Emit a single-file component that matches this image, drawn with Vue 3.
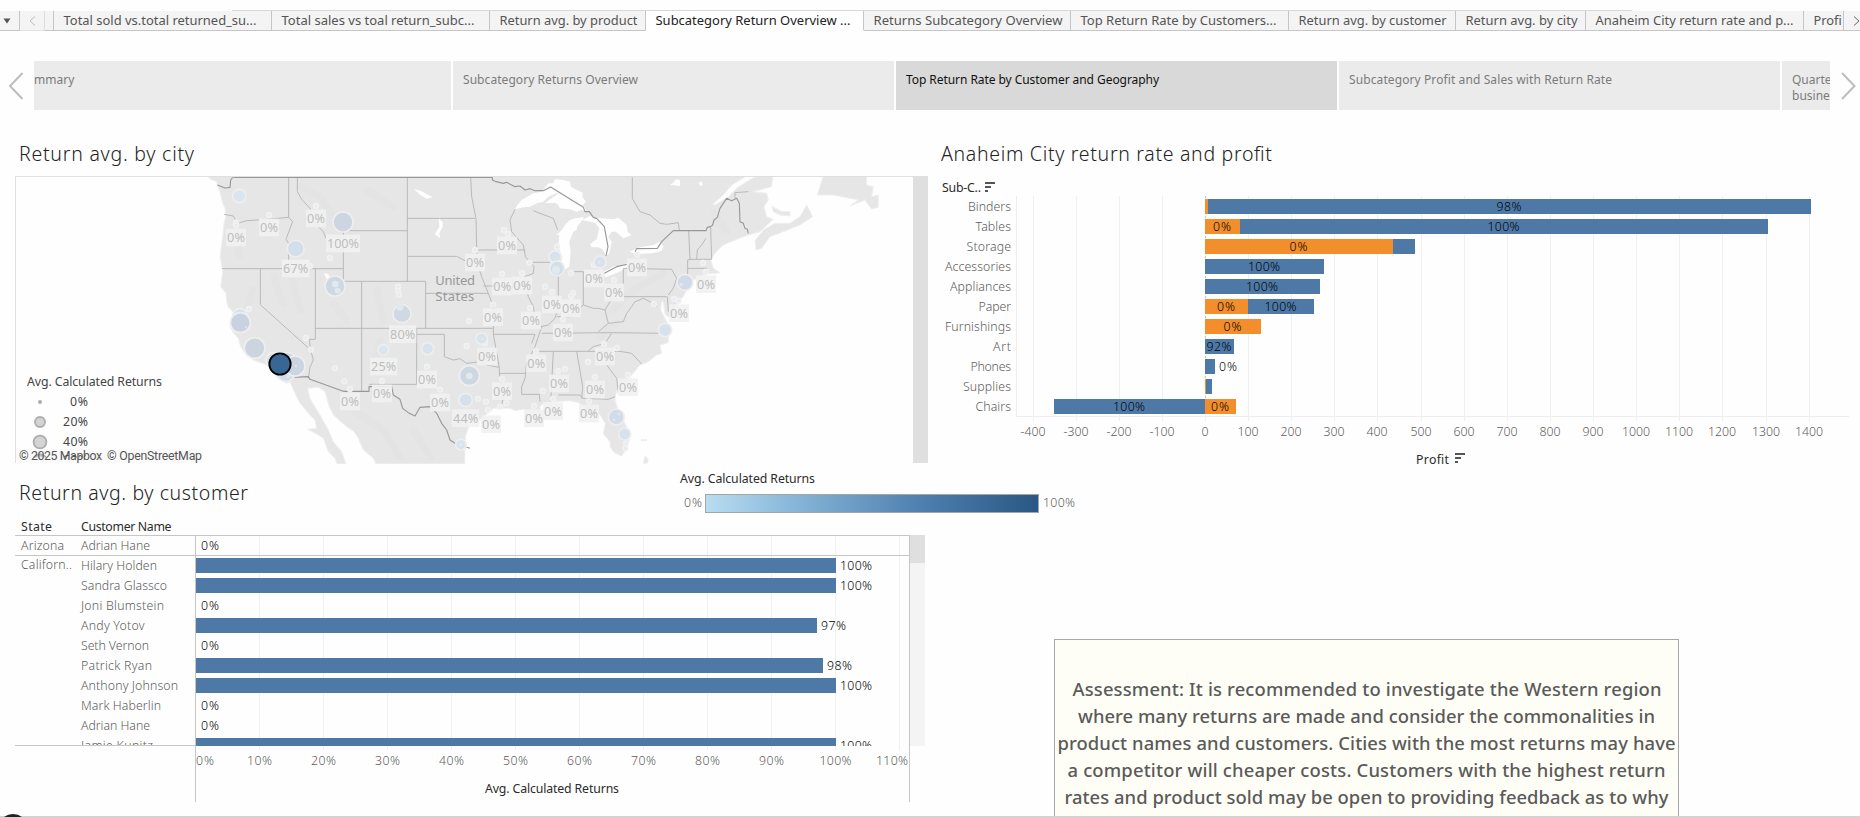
<script setup>
const tabs = [
  { t: 'Total sold vs.total returned_su...', w: 218 },
  { t: 'Total sales vs toal return_subc...', w: 218 },
  { t: 'Return avg. by product', w: 156 },
  { t: 'Subcategory Return Overview ...', w: 218, active: true },
  { t: 'Returns Subcategory Overview', w: 207 },
  { t: 'Top Return Rate by Customers...', w: 218 },
  { t: 'Return avg. by customer', w: 167 },
  { t: 'Return avg. by city', w: 130 },
  { t: 'Anaheim City return rate and p...', w: 218 },
  { t: 'Profit', w: 40 }
]
const tabTextWidth = { 0: 193, 1: 193, 2: 138, 3: 195, 4: 189, 5: 196, 6: 148, 7: 112, 8: 198, 9: 33 }

const points = [
  { t: 'Subcategory Returns Overview', ls: 0.06 },
  { t: 'Top Return Rate by Customer and Geography', active: true, ls: -0.06 },
  { t: 'Subcategory Profit and Sales with Return Rate', ls: 0.1 }
]

// Profit chart: segments are [from, to, colour, label]
const B = '#4e79a7'
const O = '#f28e2b'
const zero = 1205
const profit = [
  { n: 'Binders', w: 43, s: [[1205, 1208, O], [1208, 1811, B, '98%']] },
  { n: 'Tables', w: 35.5, s: [[1205, 1240, O, '0%'], [1240, 1768, B, '100%']] },
  { n: 'Storage', w: 44.5, s: [[1205, 1393, O, '0%'], [1393, 1415, B]] },
  { n: 'Accessories', w: 66, s: [[1205, 1324, B, '100%']] },
  { n: 'Appliances', w: 61, s: [[1205, 1320, B, '100%']] },
  { n: 'Paper', w: 32.5, s: [[1205, 1248, O, '0%'], [1248, 1314, B, '100%']] },
  { n: 'Furnishings', w: 66, s: [[1205, 1261, O, '0%']] },
  { n: 'Art', w: 18, s: [[1205, 1234, B, '92%']] },
  { n: 'Phones', w: 40.5, s: [[1205, 1215, B]], out: '0%' },
  { n: 'Supplies', w: 48, s: [[1205, 1206, O], [1206, 1212, B]] },
  { n: 'Chairs', w: 35.5, s: [[1054, 1205, B, '100%'], [1205, 1236, O, '0%']] }
]
const profitTicks = Array.from({ length: 19 }, (_, i) => (i - 4) * 100)
const px = (v) => Math.round(zero + v * 0.4312) + 0.5
const pctW = { 2: 18, 3: 25, 4: 32 }
const numW = { 1: 7, 3: 21, 4: 28 }
const numLen = (v) => (v < 0 ? 25 : numW[String(v).length])

const customers = [
  { n: 'Adrian Hane', w: 69, v: 0 },
  { n: 'Hilary Holden', w: 76, v: 100 },
  { n: 'Sandra Glassco', w: 86, v: 100 },
  { n: 'Joni Blumstein', w: 83, v: 0 },
  { n: 'Andy Yotov', w: 63.5, v: 97 },
  { n: 'Seth Vernon', w: 68, v: 0 },
  { n: 'Patrick Ryan', w: 71, v: 98 },
  { n: 'Anthony Johnson', w: 97, v: 100 },
  { n: 'Mark Haberlin', w: 80, v: 0 },
  { n: 'Adrian Hane', w: 69, v: 0 },
  { n: 'Jamie Kunitz', w: 72, v: 100 }
]
const rateTicks = Array.from({ length: 12 }, (_, i) => i * 10)
const cx = (v) => Math.round(195.5 + v * 6.405)

// Map geometry, three units per pixel
const land =
  'M622,138 632,148 650,155 662,195 668,220 675,235 677,262 672,280 668,320 660,380 668,420 665,450 662,470 678,490 680,515 684,530 702,548 695,570 690,590 700,608 715,625 722,650 735,670 760,690 800,705 830,740 860,760 870,755 885,790 900,820 930,855 945,870 950,895 923,898 950,912 970,925 985,965 1005,985 1012,1002 1038,1002 1025,965 1000,935 985,900 960,855 950,840 930,805 923,775 955,772 975,785 988,830 1000,855 1040,890 1062,905 1075,925 1090,960 1120,985 1128,1002 1394,1002 1396,920 1410,880 1440,868 1470,845 1480,835 1530,835 1545,842 1570,838 1600,850 1625,865 1620,830 1630,820 1660,815 1710,812 1735,818 1750,830 1765,850 1790,845 1800,855 1816,880 1810,912 1830,935 1830,950 1843,968 1865,978 1877,960 1888,930 1880,890 1855,840 1845,810 1850,780 1880,755 1895,735 1920,705 1945,695 1970,675 1985,670 1980,645 2005,638 2005,620 2012,590 2000,575 1995,565 1982,540 1985,515 1990,515 1996,555 2010,562 2020,555 2035,510 2050,500 2060,480 2075,465 2050,462 2080,450 2120,432 2145,430 2160,428 2140,415 2132,390 2145,370 2170,345 2205,330 2245,315 2280,305 2320,268 2300,260 2292,230 2305,210 2300,190 2260,185 2315,170 2318,138 2270,138 2240,155 2210,175 2185,200 2145,225 2138,223 2170,195 2195,165 2240,138Z M2268,360 2265,332 2290,300 2325,280 2370,280 2400,260 2420,225 2438,260 2400,285 2350,305 2310,320 2285,355Z M2315,228 2345,245 2370,245 2370,258 2340,255 2320,245Z M2470,138 2452,195 2500,195 2550,205 2575,210 2550,228 2595,210 2615,238 2635,232 2635,195 2615,200 2620,170 2600,165 2600,138Z M1930,1000 1935,978 1945,990 1942,1000Z M1923,929H1940V932H1923Z'
const lakes =
  'M105,118 112,105 125,90 160,70 185,65 205,40 220,40 225,27 250,30 270,35 272,48 280,55 308,68 308,82 318,95 308,105 322,125 305,120 290,125 270,118 240,115 232,102 222,98 195,100 210,88 225,78 240,65 205,80 190,95 170,100 150,110 130,112Z M235,230 238,195 230,195 245,180 255,165 270,150 285,145 312,142 300,160 292,168 290,180 280,185 268,215 272,245 268,290 250,302 240,290 247,262Z M305,150 330,138 362,145 400,148 415,143 440,165 443,185 455,195 430,205 408,185 395,185 385,200 395,215 388,250 378,258 368,238 355,232 335,232 330,222 350,208 358,175 345,158Z M372,305 400,290 440,280 450,285 430,300 395,315 375,322Z M448,245 480,232 520,225 540,215 550,230 545,242 520,250 470,252Z M570,45 580,38 588,28 600,30 600,48 585,46Z M655,38 666,34 668,46 660,48Z'
const westLakes =
  'M1242,178 1262,182 1275,190 1298,202 1280,206 1262,196Z M1316,252 1320,270 1328,275 1328,290 1318,310 1320,325 1312,318 1305,312 1318,290Z M972,430 985,432 990,445 980,448Z'
const nation =
  'M700,142H1477V150L1488,155 1510,160 1520,157 1545,170 1560,168 1575,180 1590,176 1605,182 1630,182 1652,171 1750,232 1755,245 1768,245 1780,262 1790,265 1813,290 1824,350 1818,378 M1813,430 1850,410 1880,403 M1905,365 1910,356 1972,355 1985,335 2020,302H2118L2122,292 2132,290 2138,285 2142,270 2152,262 2160,235 2180,205 2195,212 2210,205 2218,220 2220,275 2230,280 2235,295 2242,298 2245,310 M875,742 925,740 930,748 1030,784H1107V770H1175L1180,795 1200,808 1208,835 1225,848 1245,858 1260,832 1290,830 1310,850 1325,880 1340,900 1350,930 1365,940 1410,955 M652,165 675,174 690,172 692,150 698,142'
const states =
  'M672,253 700,258 712,280 740,272 800,268 866,262 M866,142V262L878,275 858,328 866,340V416 M666,416H1030 M892,142V185L905,208 930,235 940,270 955,290 970,305 978,325 M1030,302H1222 M1030,302V454H1277V595 M781,416V524L932,660 940,690 930,712 925,745 M946,416V628H928L932,660 M1085,454V784 M946,595H1480 M1222,142V454 M1222,265H1425 M1222,379H1370L1395,392 1430,385 M1250,595V763H1108 M1250,613H1333V680L1360,690 1380,686 1400,700 1440,695 1460,705 1498,712 M1277,490H1465 M1412,142 1415,200 1428,265 1430,360 1435,410 1445,440 1465,490 1480,530V613L1498,712V730L1510,800 1505,825 M1430,360H1576 M1545,238 1530,270 1535,305 1570,345 1576,380 1602,410 1600,430 1575,440 1575,460 1585,500 1600,530 1605,560 1625,590 M1450,468H1575 M1480,613H1605L1595,640 M1598,397H1650 M1600,242 1620,250 1660,265 1673,300 M1675,440V530L1665,565 1645,585 1625,590 M1750,425V525 M1705,425H1750 M1670,560 1710,560 1750,525 1780,535 1795,535 1815,540 1830,515 1868,470 M1815,540 1825,580 1795,605 M1625,610 1835,608 1995,610 M1835,610 1815,640 1780,650 1765,662 M1605,664H1860L1895,670 1925,702 M1625,590 1605,650 1580,700 1575,745 1565,770 1565,793H1618L1620,815 M1498,730H1577 M1660,664 1652,815 M1730,664 1748,770 1745,805 M1675,795H1740L1748,805 1825,808 1845,800 M1800,664 1820,705 1850,745 1855,790 M1825,580 1870,575 1880,550 1895,530 1905,515 1930,505 1950,515 1970,530 M1870,415V500H2000 M1870,415 2015,418 2030,445 2020,475 2005,495 M2066,302 2070,388 2063,390V435 M2132,292 2135,388H2070 M2118,325 2105,345 2092,360 2090,388 M2063,415H2122 M1897,142 1897,205 1920,245 1950,255 1980,280 2000,283 2035,278 2038,300 M2205,205V188L2245,185 M2002,500 2005,545'
const relief = 'M900,170 960,200 1000,260 1060,330 M1100,180 1180,230 M820,440 850,520 M870,420 900,540 M1000,520 1040,570 M1130,480 1150,570 M1140,630 1120,720 M700,300 720,380 M760,480 740,530 M1840,540 1900,480 1990,430 M1800,620 1850,580 M2140,250 2180,300 M1060,840 1150,900 1200,980 M1240,900 1290,980'
const marks = [
  [718, 198, 20, '#dae5ee'], [1029, 276, 30, '#ccd5e0'], [887, 356, 25, '#d2dee8'], [1005, 468, 30, '#ced8e2'],
  [1206, 551, 27, '#cfd9e4'], [720, 558, 22, '#d5e0ea'], [721, 578, 30, '#c9d3df'], [764, 654, 31, '#cbd4df'],
  [820, 690, 22, '#d8e3ec'], [858, 728, 27, '#d3deea'], [862, 695, 28, '#cdd7e2'], [885, 708, 30, '#cbd5e1'],
  [1150, 660, 16, '#dae5ee'], [1283, 656, 18, '#d7e2ec'], [1408, 737, 30, '#cdd7e1'], [1397, 810, 20, '#d5e0eb'],
  [1383, 944, 16, '#d8e3ed'], [1665, 380, 18, '#d7e2ec'], [1671, 415, 22, '#d2deea'], [1800, 396, 18, '#d7e2ec'],
  [2055, 457, 24, '#d0dbe7'], [1995, 600, 20, '#d6e1ec'], [1445, 626, 17, '#d8e3ec'], [1849, 861, 24, '#d1dce8'],
  [1874, 912, 18, '#d7e2ec']
]
const dots = [
  [807, 255], [948, 228], [708, 278], [708, 286], [990, 384], [930, 408], [747, 537], [1194, 470], [1194, 482], [1197, 494],
  [918, 624], [933, 659], [1005, 715], [1033, 754], [1050, 777], [1146, 753], [1281, 710], [1320, 779], [1407, 573],
  [1400, 648], [1512, 300], [1524, 312], [1425, 360], [1671, 350], [1588, 398], [1506, 432], [1566, 429], [1713, 429], [1782, 405],
  [1842, 450], [1912, 375], [2109, 399], [2118, 425], [1635, 470], [1656, 486], [1719, 489], [1714, 498], [1962, 522], [2022, 507],
  [2036, 512], [1479, 524], [1590, 534], [1689, 568], [1455, 640], [1812, 642], [1851, 654], [1608, 663], [1764, 696],
  [1674, 723], [1695, 717], [1785, 741], [1884, 735], [1506, 747], [1434, 807], [1458, 815], [1464, 840], [1500, 830], [1520, 820],
  [1629, 783], [1659, 807], [1602, 828], [1767, 814], [1878, 940], [1876, 955]
]
const inner = [
  [1006, 462, 10], [1013, 482, 9], [1200, 531, 11], [738, 591, 3], [888, 708, 3], [864, 740, 4], [1408, 738, 10], [1668, 420, 12],
  [1798, 398, 4], [2044, 463, 5], [1978, 600, 3], [1448, 627, 4], [1857, 852, 4], [1842, 870, 4], [1383, 944, 6]
]
const labels = [
  [708, 323], [807, 293], [948, 266], [1029, 341, '100%'], [887, 416, '67%'], [1208, 613, '80%'], [1151, 710, '25%'],
  [1281, 749], [1146, 791], [1050, 815], [1320, 818], [1397, 865, '44%'], [1521, 347], [1425, 398], [1507, 470],
  [1567, 467], [1782, 446], [1911, 413], [1842, 488], [2118, 463], [1656, 524], [1713, 535], [2037, 550], [1479, 562],
  [1593, 572], [1689, 608], [1461, 680], [1815, 680], [1609, 700], [1677, 761], [1785, 779], [1884, 772], [1506, 784],
  [1602, 865], [1659, 844], [1767, 851], [1473, 883]
].map(([x, y, t = '0%']) => ({ x, y, t, w: { 2: 54, 3: 76, 4: 96 }[t.length] }))
</script>

<template>
  <div class="page">
    <nav class="tabs">
      <div class="tab menu"><svg width="8" height="6"><path d="M0.5,0.5H7.5L4,5.5Z" fill="#555" /></svg></div>
      <div class="tab prev"><svg width="7" height="10"><path d="M6,0.5 1,5 6,9.5" fill="none" stroke="#bbb" /></svg></div>
      <div class="tab spacer"></div>
      <div v-for="(tab, i) in tabs" :key="i" class="tab" :class="{ active: tab.active }" :style="{ width: tab.w + 'px' }">
        <svg class="tab-text" :width="tab.w - 2" height="20">
          <text x="9.5" y="14" :textLength="tabTextWidth[i]" lengthAdjust="spacingAndGlyphs">{{ tab.t }}</text>
        </svg>
      </div>
      <div class="tab next"><svg width="7" height="10"><path d="M1,0.5 6,5 1,9.5" fill="none" stroke="#666" /></svg></div>
      <i class="tab-rule"></i>
    </nav>

    <section class="story">
      <svg class="arrow" width="34" height="49"><path d="M22.5,12 10,25 22.5,38" /></svg>
      <div class="point first">mmary</div>
      <div v-for="p in points" :key="p.t" class="point" :class="{ active: p.active }" :style="{ letterSpacing: p.ls + 'px' }">{{ p.t }}</div>
      <div class="point last">Quarte<br />busine</div>
      <svg class="arrow" width="30" height="49"><path d="M12,12 24.5,25 12,38" /></svg>
    </section>

    <main class="dash">
      <section class="col">
        <h2 class="title"><svg width="900" height="40"><text x="19" y="31" textLength="175">Return avg. by city</text></svg></h2>
        <svg class="map" viewBox="0 170 930 295" width="930" height="295">
          <defs>
            <clipPath id="mapArea"><rect x="16" y="177" width="897" height="287" /></clipPath>
            <clipPath id="legendTail"><rect x="16" y="448" width="100" height="9.5" /></clipPath>
          </defs>
          <g clip-path="url(#mapArea)">
            <g transform="translate(0 130) scale(.33333)">
              <path :d="land" fill="#e6e6e6" stroke="#efefef" stroke-width="3" />
              <path :d="relief" fill="none" stroke="#e2e2e2" stroke-width="20" stroke-linecap="round" stroke-linejoin="round" opacity=".5" />
              <path :d="lakes" fill="#fefefe" transform="translate(1440 120)" />
              <path :d="westLakes" fill="#fefefe" />
              <path :d="states" fill="none" stroke="#b2b2b2" stroke-width="2.6" />
              <path :d="nation" fill="none" stroke="#989898" stroke-width="3.4" stroke-linejoin="round" />
              <g class="country">
                <text x="1306" y="465" textLength="119">United</text>
                <text x="1306" y="512" textLength="117">States</text>
              </g>
              <circle v-for="(d, i) in dots" :key="'d' + i" :cx="d[0]" :cy="d[1]" r="7" fill="#e7ebee" stroke="#f1f1f1" stroke-width="5" />
              <circle v-for="(m, i) in marks" :key="'m' + i" :cx="m[0]" :cy="m[1]" :r="m[2]" :fill="m[3]" stroke="#eeeeee" stroke-width="5" />
              <circle v-for="(d, i) in inner" :key="'i' + i" :cx="d[0]" :cy="d[1]" :r="d[2]" fill="#e0e9f0" />
              <circle cx="840" cy="702" r="32" fill="#396795" stroke="#000" stroke-width="5.5" />
              <g v-for="(l, i) in labels" :key="'l' + i" class="pct">
                <rect :x="l.x - l.w / 2 - 3" :y="l.y - 27" :width="l.w + 6" height="53" />
                <text :x="l.x - l.w / 2" :y="l.y + 14" :textLength="l.w">{{ l.t }}</text>
              </g>
            </g>
            <g class="size-legend">
              <text class="dark" x="27" y="386" textLength="135">Avg. Calculated Returns</text>
              <circle cx="40" cy="402" r="2" class="solid" />
              <circle cx="40" cy="422" r="5" />
              <circle cx="40" cy="442" r="6.4" />
              <text x="70" y="406" textLength="18">0%</text>
              <text x="63" y="426" textLength="25">20%</text>
              <text x="63" y="446" textLength="25">40%</text>
              <rect x="16" y="449" width="187" height="14" fill="#fafafa" />
              <g clip-path="url(#legendTail)">
                <circle cx="40" cy="462" r="7.5" />
                <text x="63" y="464" textLength="25">60%</text>
              </g>
              <text class="credit" x="19" y="460" textLength="83">© 2025 Mapbox</text>
              <text class="credit" x="107" y="460" textLength="95">© OpenStreetMap</text>
            </g>
          </g>
          <path d="M15.5,463V176.5H913" fill="none" stroke="#e0e0e0" />
          <rect x="913" y="176" width="15" height="287" fill="#dfdfdf" />
        </svg>

        <h2 class="title lower"><svg width="900" height="50"><text x="19" y="35" textLength="229">Return avg. by customer</text></svg></h2>
        <svg class="sheet" viewBox="0 515 930 302" width="930" height="302">
          <defs><clipPath id="rows"><rect x="0" y="515" width="930" height="231" /></clipPath></defs>
          <text class="dark" x="21" y="531" textLength="31">State</text>
          <text class="dark" x="81" y="531" textLength="90.5">Customer Name</text>
          <line v-for="t in rateTicks.slice(1)" :key="'g' + t" :x1="cx(t) - 0.5" :x2="cx(t) - 0.5" y1="536" y2="750" class="grid" />
          <g clip-path="url(#rows)">
            <text class="cell" x="21" y="550" textLength="43">Arizona</text>
            <text class="cell" x="21" y="569" textLength="51">Californ..</text>
            <g v-for="(c, i) in customers" :key="i">
              <text class="cell" x="81" :y="550 + i * 20" :textLength="c.w">{{ c.n }}</text>
              <rect v-if="c.v" x="196" :y="538 + i * 20" :width="cx(c.v) - 196" height="15" fill="#4e79a7" />
              <text class="val" :x="c.v ? cx(c.v) + 4 : 201" :y="550 + i * 20" :textLength="pctW[String(c.v).length + 1]">{{ c.v }}%</text>
            </g>
          </g>
          <path class="rule" d="M15,535.5H909 M15,555.5H909 M15,745.5H195 M195.5,535V802 M909.5,535V802" />
          <rect x="910" y="535" width="15" height="211" fill="#f4f4f4" />
          <rect x="910" y="535" width="15" height="28" fill="#dfdfdf" />
          <text
            v-for="t in rateTicks" :key="'a' + t" class="cell" y="765"
            :x="t === 0 ? 196 : t === 110 ? 876 : cx(t) - pctW[String(t).length + 1] / 2 - 0.5"
            :textLength="pctW[String(t).length + 1]">{{ t }}%</text>
          <text class="dark" x="485" y="793" textLength="134">Avg. Calculated Returns</text>
        </svg>
      </section>

      <section class="col">
        <h2 class="title"><svg width="900" height="40"><text x="11" y="31" textLength="331">Anaheim City return rate and profit</text></svg></h2>
        <svg class="sheet" viewBox="930 170 930 310" width="930" height="310">
          <text class="dark" x="942" y="192" textLength="39">Sub-C..</text>
          <path d="M985,182h10v2h-10z M985,186h6v2h-6z M985,190h3v2h-3z" fill="#555" />
          <line v-for="t in profitTicks" :key="t" :x1="px(t)" :x2="px(t)" y1="196" y2="421" class="grid" />
          <path d="M1016.5,196V416.5H1849" class="edge" />
          <path d="M1205.5,196V416" class="zero" />
          <g v-for="(r, i) in profit" :key="r.n">
            <text class="cell" :x="1011 - r.w" :y="211 + i * 20" :textLength="r.w">{{ r.n }}</text>
            <rect v-for="s in r.s" :key="s[0]" :x="s[0]" :y="199 + i * 20" :width="s[1] - s[0]" height="15" :fill="s[2]" />
            <template v-for="s in r.s" :key="s[0]">
              <text v-if="s[3]" class="val" :x="(s[0] + s[1]) / 2 - pctW[s[3].length] / 2 - 0.5" :y="211 + i * 20" :textLength="pctW[s[3].length]">{{ s[3] }}</text>
            </template>
            <text v-if="r.out" class="val" x="1219" :y="211 + i * 20" textLength="18">{{ r.out }}</text>
          </g>
          <text v-for="t in profitTicks" :key="'n' + t" class="cell" :x="px(t) - numLen(t) / 2 - 0.5" y="436" :textLength="numLen(t)">{{ t }}</text>
          <text class="dark" x="1416" y="464" textLength="33">Profit</text>
          <path d="M1455,453h10v2h-10z M1455,457h6v2h-6z M1455,461h3v2h-3z" fill="#555" />
        </svg>
        <div class="note">
          <svg width="624" height="176">
            <text x="17.5" y="55.5" textLength="589">Assessment: It is recommended to investigate the Western region</text>
            <text x="23" y="82.5" textLength="577">where many returns are made and consider the commonalities in</text>
            <text x="2.5" y="109.5" textLength="618">product names and customers. Cities with the most returns may have</text>
            <text x="12.5" y="136.5" textLength="598">a competitor will cheaper costs. Customers with the highest return</text>
            <text x="9.5" y="163.5" textLength="604">rates and product sold may be open to providing feedback as to why</text>
          </svg>
        </div>
      </section>

      <aside class="color-legend">
        <svg width="400" height="45" viewBox="678 470 400 45">
          <defs>
            <linearGradient id="ramp">
              <stop offset="0" stop-color="#b9ddf1" />
              <stop offset=".25" stop-color="#8ab8da" />
              <stop offset=".65" stop-color="#4e7fae" />
              <stop offset="1" stop-color="#2a5783" />
            </linearGradient>
          </defs>
          <text class="dark" x="680" y="483" textLength="135">Avg. Calculated Returns</text>
          <text class="cell" x="684" y="507" textLength="18">0%</text>
          <rect x="705.5" y="494.5" width="333" height="18" fill="url(#ramp)" stroke="#a8a69c" />
          <text class="cell" x="1043" y="507" textLength="32">100%</text>
        </svg>
      </aside>
    </main>
    <i class="bottom-rule"></i>
    <i class="knob"></i>
  </div>
</template>

<style>
body {
  margin: 0;
  background: #fefefe;
}
</style>

<style scoped>
.page {
  position: relative;
  width: 1860px;
  height: 817px;
  overflow: hidden;
  display: flex;
  flex-direction: column;
  background: #fefefe;
  font-family: "Noto Sans", "Open Sans", sans-serif;
  color: #666;
}
svg { display: block; }
.tabs {
  position: relative;
  display: flex;
  height: 20px;
  padding-top: 11px;
  flex: none;
}
.tab {
  box-sizing: border-box;
  height: 20px;
  flex: none;
  background: #f4f4f4;
  border-right: 1px solid #c6c6c6;
  border-bottom: 1px solid #c6c6c6;
  overflow: hidden;
}
.tab.active { background: #fff; border-bottom-color: #fff; }
.tab-text text { font-size: 13px; fill: #555; }
.tab.active text { fill: #222; }
.menu, .prev, .next { display: flex; align-items: center; justify-content: center; }
.menu { width: 20px; padding-right: 5px; }
.prev { width: 25px; border-right-color: #ddd; border-bottom-color: #e0e0e0; }
.spacer { width: 9px; }
.next { width: 17px; border-right: 0; padding-left: 8px; }
.tab-rule {
  position: absolute;
  left: 232px;
  top: 10px;
  width: 1400px;
  height: 1px;
  background: #d8d8d8;
}
.story {
  display: flex;
  height: 49px;
  margin-top: 30px;
  flex: none;
}
.arrow { flex: none; }
.arrow path { fill: none; stroke: #bdbdbd; stroke-width: 2; }
.point {
  box-sizing: border-box;
  flex: none;
  width: 441px;
  margin-right: 2px;
  padding: 11px 0 0 10px;
  background: #ebebeb;
  color: #7b7b7b;
  font-size: 12px;
  line-height: 16px;
  overflow: hidden;
  white-space: nowrap;
}
.point.active { background: #d9d9d9; color: #111; }
.point.first { width: 417px; padding-left: 0; }
.point.last { width: 48px; margin-right: 0; }
.dash {
  position: relative;
  display: flex;
  flex: 1;
}
.col {
  width: 930px;
  flex: none;
  display: flex;
  flex-direction: column;
}
.title { margin: 20px 0 0; height: 40px; }
.title text { font-size: 19.5px; font-weight: 300; fill: #222; }
.title.lower { margin: 0; height: 50px; }
.map, .sheet { flex: none; }
.sheet text, .color-legend text, .size-legend text { font-size: 12.3px; }
.sheet .cell, .color-legend .cell { fill: #5c5c5c; font-weight: 350; }
.sheet .val { fill: #000; font-weight: 350; }
.dark { fill: #2b2b2b; }
.grid { stroke: #f0f0f0; }
.edge { fill: none; stroke: #ededed; }
.zero { fill: none; stroke: #c4c4c4; stroke-dasharray: 2 2; }
.rule { fill: none; stroke: #c6c6c6; }
.country text { font-size: 39px; fill: #999; }
.pct rect { fill: #f1f1f1; fill-opacity: 0.92; }
.pct text { font-size: 38px; fill: #bdbdbd; }
.size-legend circle { fill: #d4d4d4; stroke: #adadad; stroke-width: 1.8; }
.size-legend circle.solid { fill: #adadad; stroke: none; }
.size-legend text { fill: #444; }
.size-legend .credit { fill: #555; font-family: Roboto, "Noto Sans", sans-serif; }
.note {
  box-sizing: border-box;
  width: 625px;
  height: 178px;
  margin: 159px 0 0 124px;
  border: 1px solid #a8a8a8;
  border-bottom: 0;
  background: #fefef6;
  overflow: hidden;
}
.note text { font-size: 18.4px; font-weight: 500; fill: #5a5a5a; }
.color-legend { position: absolute; left: 678px; top: 360px; }
.bottom-rule {
  position: absolute;
  left: 0;
  top: 816px;
  width: 1860px;
  height: 1px;
  background: #d2d2d2;
}
.knob {
  position: absolute;
  left: -2px;
  top: 814px;
  width: 30px;
  height: 30px;
  border-radius: 50%;
  background: #222;
}
</style>
